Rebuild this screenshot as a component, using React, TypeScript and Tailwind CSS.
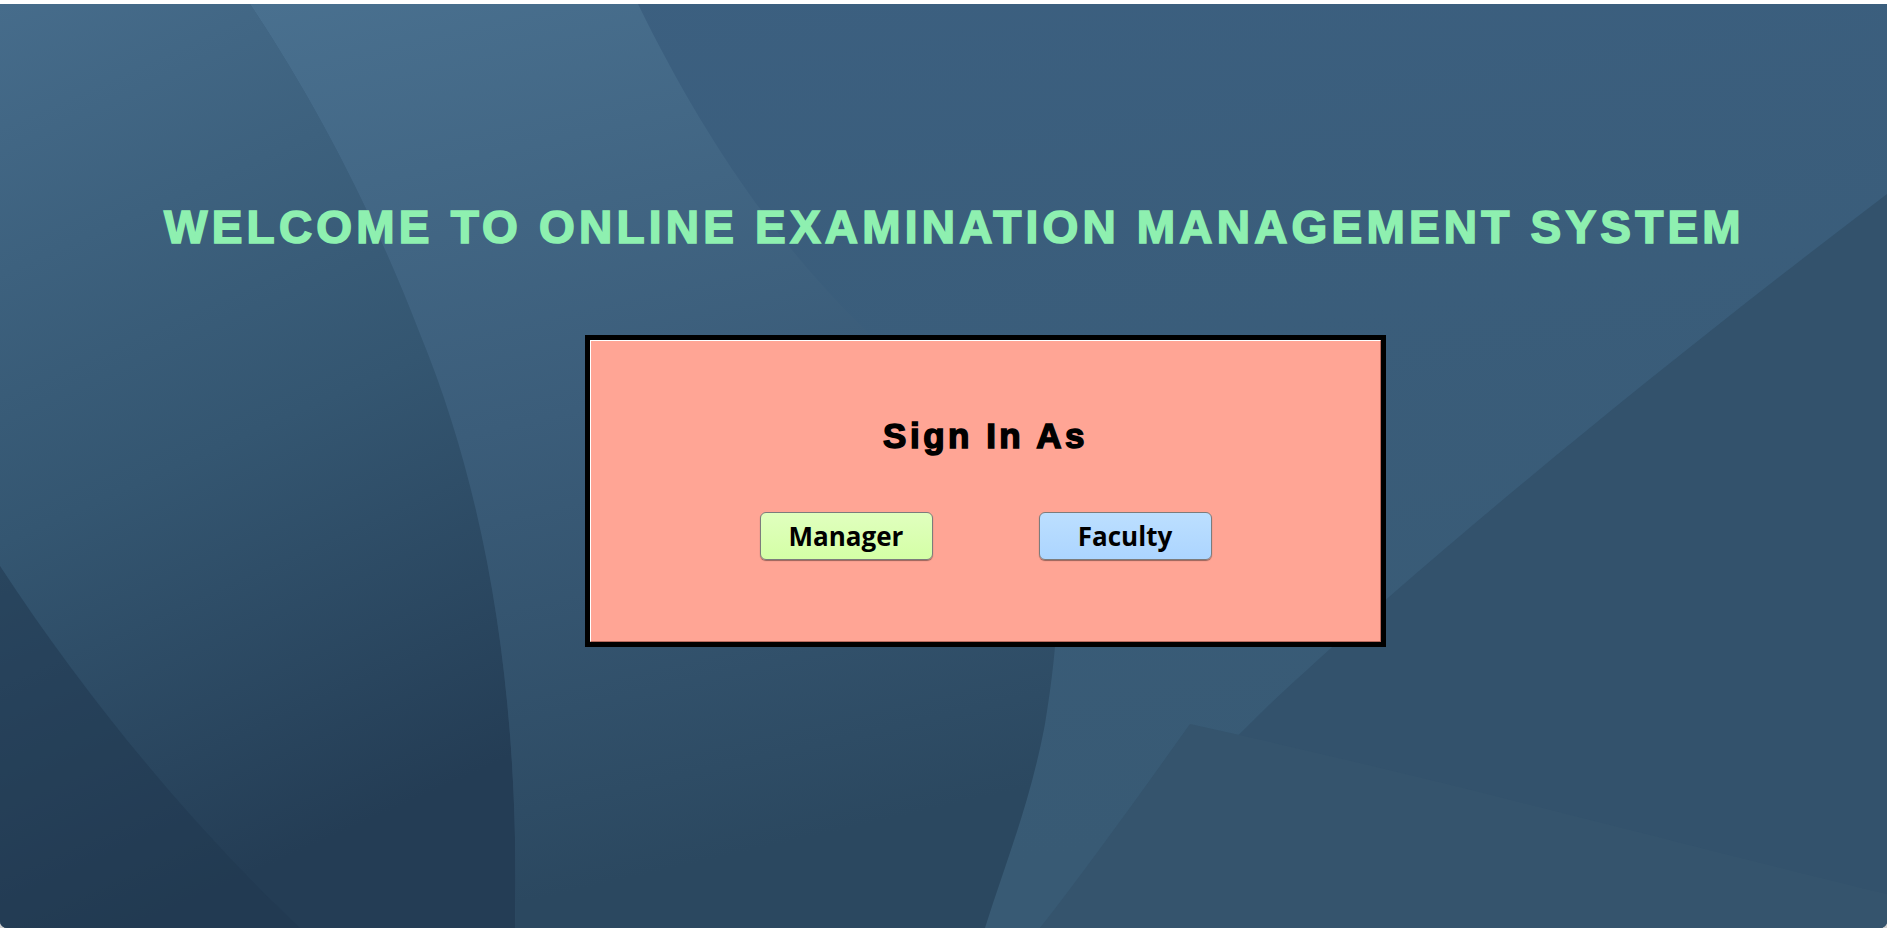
import React from "react";

function Wallpaper() {
  return (
    <svg
      className="absolute inset-0 h-full w-full"
      viewBox="0 0 1887 924"
      preserveAspectRatio="none"
      xmlns="http://www.w3.org/2000/svg"
    >
      <defs>
        <linearGradient id="base" x1="0" y1="0" x2="0.3" y2="1">
          <stop offset="0" stopColor="#3c6081" />
          <stop offset="1" stopColor="#385a74" />
        </linearGradient>
        <linearGradient id="left" x1="0" y1="0" x2="0.25" y2="1">
          <stop offset="0" stopColor="#466c8b" />
          <stop offset="0.55" stopColor="#345671" />
          <stop offset="1" stopColor="#243d55" />
        </linearGradient>
        <linearGradient id="mid" x1="0" y1="0" x2="0.2" y2="1">
          <stop offset="0" stopColor="#49708f" />
          <stop offset="0.5" stopColor="#3b5d7a" />
          <stop offset="1" stopColor="#2b4860" />
        </linearGradient>
      </defs>
      <rect width="1887" height="924" fill="url(#base)" />
      {/* darker region below the right diagonal */}
      <path d="M1887 190 C1650 370 1420 560 1270 700 C1180 790 1100 860 1040 924 L1887 924 Z" fill="#33526c" />
      {/* faint lighter band at bottom right */}
      <path d="M1190 720 C1420 770 1680 840 1887 890 L1887 924 L1040 924 C1090 860 1140 790 1190 720 Z" fill="#35546d" />
      {/* middle band */}
      <path d="M250 0 L638 0 C760 250 900 380 1062 470 C1058 560 1062 620 1045 720 C1030 800 1005 860 985 924 L515 924 C520 700 490 500 420 330 C370 200 310 90 250 0 Z" fill="url(#mid)" />
      {/* left region */}
      <path d="M0 0 L250 0 C310 90 370 200 420 330 C490 500 520 700 515 924 L0 924 Z" fill="url(#left)" />
      {/* bottom-left darker */}
      <path d="M0 562 C90 700 200 830 300 924 L0 924 Z" fill="#213950" opacity="0.55" />
    </svg>
  );
}

export default function App() {
  return (
    <div className="flex h-[928px] w-full flex-col bg-[#cfcfcf]">
      <div className="h-[4px] w-full bg-white" />
      <div className="relative flex flex-1 flex-col items-center overflow-hidden rounded-b-[7px]">
        <Wallpaper />

        <h1 className="relative mt-[196px] ml-[22px] text-[46px] leading-[54px] font-bold tracking-[4.2px] text-[#8ef0b0] font-['Liberation_Sans',Arial,sans-serif] [-webkit-text-stroke:1.6px_#8ef0b0]">
          WELCOME TO ONLINE EXAMINATION MANAGEMENT SYSTEM
        </h1>

        <div className="relative mt-[81px] ml-[84px] h-[312px] w-[801px] border-[5px] border-black">
          <div className="flex h-full w-full flex-col items-center border border-t-white border-l-white border-r-[#b86a5c] border-b-[#b86a5c] bg-[#ffa595]">
            <h2 className="mt-[75px] text-[35px] leading-[40px] font-bold tracking-[3.5px] text-black font-['Liberation_Sans',Arial,sans-serif] [-webkit-text-stroke:1.5px_#000]">
              Sign In As
            </h2>
            <div className="mt-[56px] flex gap-[106px]">
              <button className="h-[48px] w-[173px] rounded-[6px] border border-[#7c7c7c] bg-gradient-to-b from-[#e0ffbe] to-[#d4ffa6] text-[26px] font-bold text-black shadow-[0_1px_1px_rgba(0,0,0,0.4)] font-['Open_Sans',sans-serif]">
                Manager
              </button>
              <button className="h-[48px] w-[173px] rounded-[6px] border border-[#7c7c7c] bg-gradient-to-b from-[#bcdfff] to-[#acd5ff] text-[26px] font-bold text-black shadow-[0_1px_1px_rgba(0,0,0,0.4)] font-['Open_Sans',sans-serif]">
                Faculty
              </button>
            </div>
          </div>
        </div>
      </div>
    </div>
  );
}
